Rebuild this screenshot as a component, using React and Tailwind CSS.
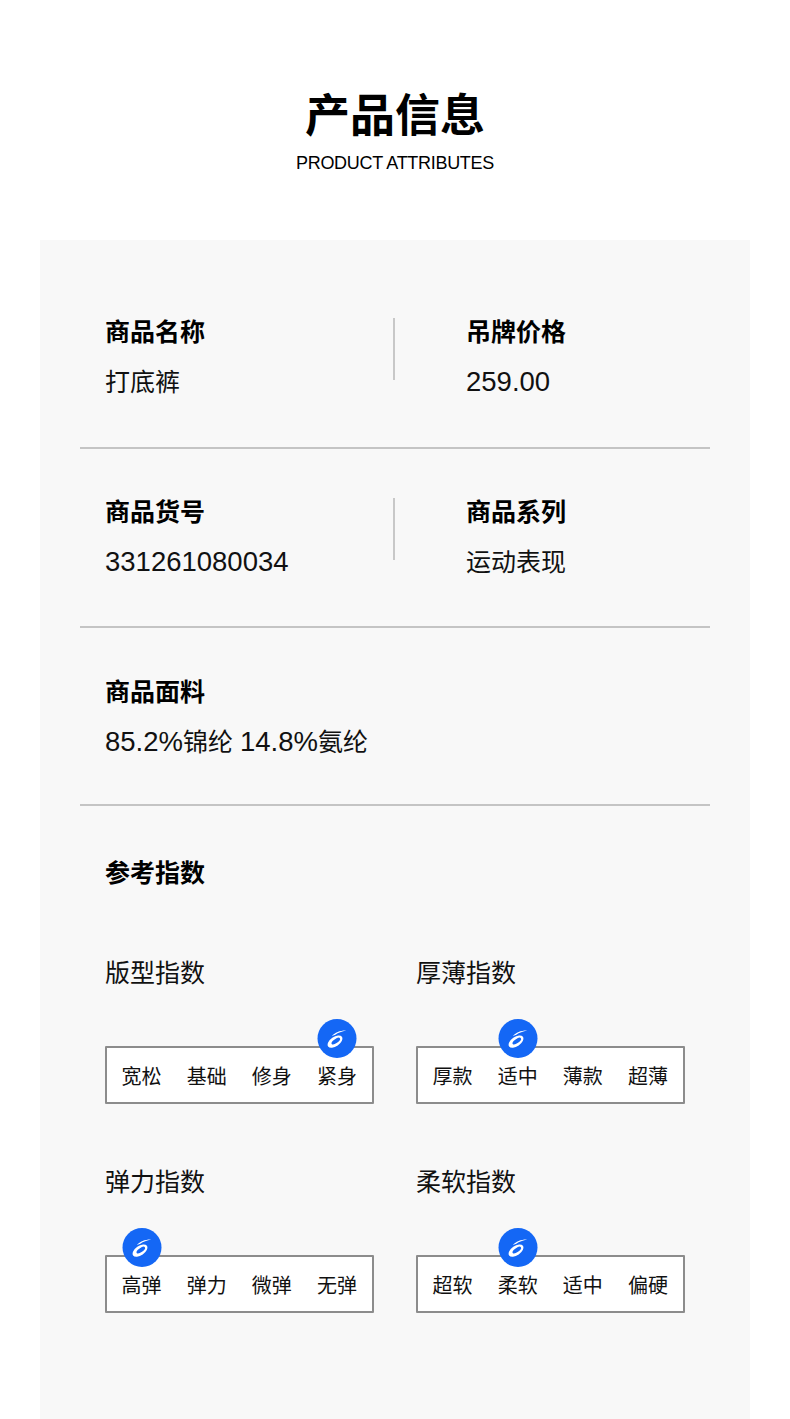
const font = "[font-family:'Liberation_Sans','Noto_Sans_CJK_SC',sans-serif]";

function Logo() {
  return (
    <div className="absolute -top-[46px] left-1/2 flex h-[39px] w-[39px] -translate-x-1/2 items-center justify-center rounded-full bg-[#1467f5]">
      <svg viewBox="0 0 24 24" className="h-[24px] w-[24px]">
        <ellipse cx="10.5" cy="15.6" rx="8.4" ry="4.7" fill="#fff" transform="rotate(-35 10.5 15.6)" />
        <ellipse cx="11.3" cy="15.1" rx="5" ry="2.1" fill="#1467f5" transform="rotate(-35 11.3 15.1)" />
        <path fill="#fff" d="M7.4 10C10.6 6.6 15.6 4.4 21.8 4.6 17.4 5.4 13.6 6.8 10.8 8.8Z" />
      </svg>
    </div>
  );
}

function Latin({ children }) {
  return <span className="text-[27.5px]">{children}</span>;
}

function Field({ label, value, className = "" }) {
  return (
    <div className={className}>
      <div className="text-[25px] leading-[30px] font-bold text-black">{label}</div>
      <div className="mt-[20px] h-[30px] text-[25px] leading-[30px] text-[#111]">{value}</div>
    </div>
  );
}

function Row({ left, right, top }) {
  return (
    <div className={`flex border-b-2 border-[#c4c4c4] ${top}`}>
      <Field {...left} className="w-[313px] pl-[25px]" />
      <div className="mt-[1px] h-[62px] w-[2px] bg-[#c8c8c8]" />
      <Field {...right} className="pl-[71px]" />
    </div>
  );
}

function Scale({ title, options, active }) {
  return (
    <div className="w-[269px]">
      <div className="text-[25px] leading-[30px] text-[#111]">{title}</div>
      <div className="mt-[58px] flex h-[58px] items-center justify-between rounded-[1px] border-2 border-[#8c8c8c] bg-white pt-[3px] pr-[15px] pl-[14.5px]">
        {options.map((o, i) => (
          <div key={o} className="relative text-[20px] leading-[24px] text-[#111]">
            {i === active && <Logo />}
            {o}
          </div>
        ))}
      </div>
    </div>
  );
}

export default function App() {
  return (
    <div className={`${font} min-h-[1419px] w-[790px] overflow-hidden bg-white`}>
      <header className="pt-[88px] pb-[66px] text-center text-black">
        <h1 className="text-[45px] leading-[58px] font-bold">产品信息</h1>
        <p className="mt-[7px] text-[18px] leading-[21px] tracking-[-0.3px]">PRODUCT ATTRIBUTES</p>
      </header>
      <main className="mx-[40px] h-[1179px] bg-[#f8f8f8] px-[40px]">
        <Row
          top="pt-[77px] pb-[50px]"
          left={{ label: "商品名称", value: "打底裤" }}
          right={{ label: "吊牌价格", value: <Latin>259.00</Latin> }}
        />
        <Row
          top="pt-[48px] pb-[49px]"
          left={{ label: "商品货号", value: <Latin>331261080034</Latin> }}
          right={{ label: "商品系列", value: "运动表现" }}
        />
        <div className="border-b-2 border-[#c4c4c4] pt-[49px] pb-[47px] pl-[25px]">
          <div className="text-[25px] leading-[30px] font-bold text-black">商品面料</div>
          <div className="mt-[20px] h-[30px] text-[25px] leading-[30px] text-[#111]">
            <Latin>85.2%</Latin>锦纶 <Latin>14.8%</Latin>氨纶
          </div>
        </div>
        <div className="px-[25px] pt-[52px]">
          <div className="text-[25px] leading-[30px] font-bold text-black">参考指数</div>
          <div className="mt-[70px] grid grid-cols-[269px_269px] gap-x-[42px] gap-y-[63px]">
            <Scale title="版型指数" options={["宽松", "基础", "修身", "紧身"]} active={3} />
            <Scale title="厚薄指数" options={["厚款", "适中", "薄款", "超薄"]} active={1} />
            <Scale title="弹力指数" options={["高弹", "弹力", "微弹", "无弹"]} active={0} />
            <Scale title="柔软指数" options={["超软", "柔软", "适中", "偏硬"]} active={1} />
          </div>
        </div>
      </main>
    </div>
  );
}
